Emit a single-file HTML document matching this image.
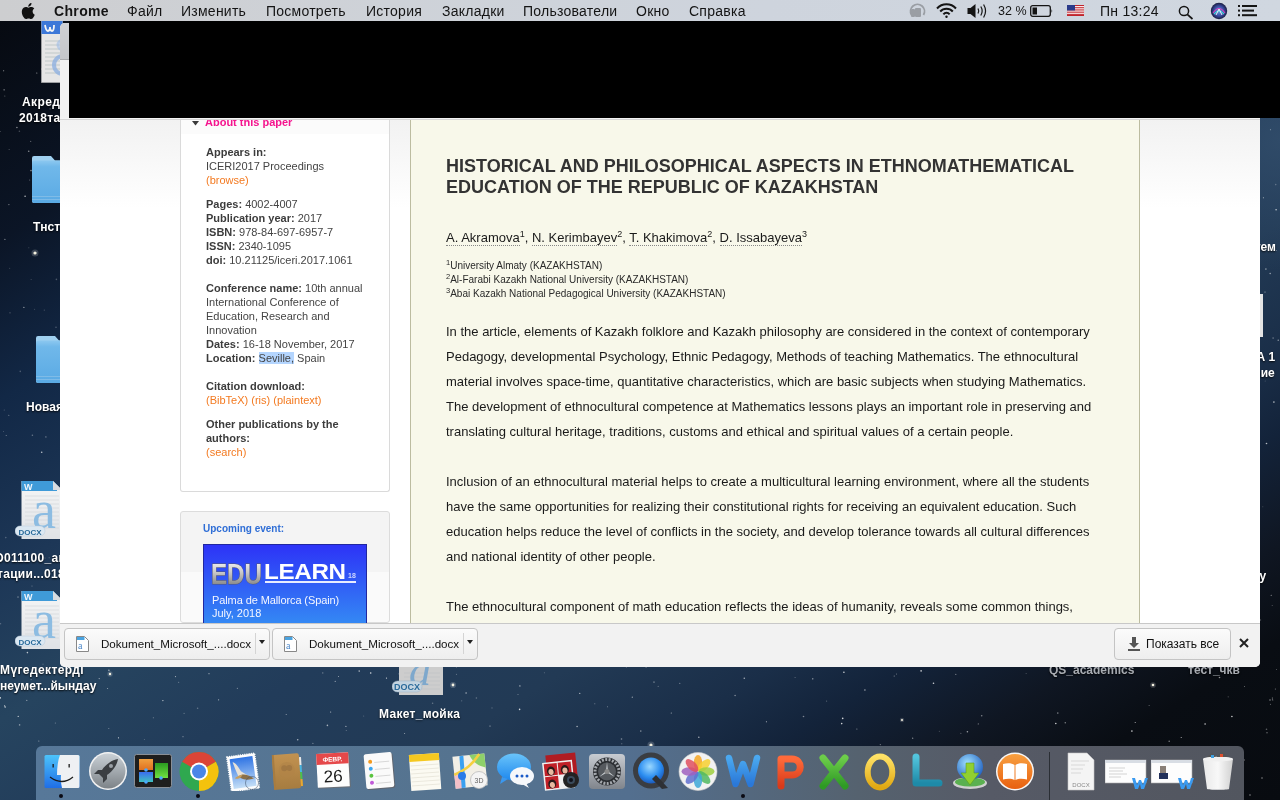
<!DOCTYPE html>
<html><head><meta charset="utf-8">
<style>
.a{will-change:transform}

*{margin:0;padding:0;box-sizing:border-box}
html,body{width:1280px;height:800px;overflow:hidden}
body{position:relative;font-family:"Liberation Sans",sans-serif;
background:radial-gradient(circle 130px at 1280px 140px, rgba(52,80,110,0.75), rgba(52,80,110,0) 100%),linear-gradient(to bottom right,#06090f 0%,#0b1526 15%,#122846 25%,#1d3757 36%,#26445f 45%,#223c5a 54%,#223a55 64%,#1a2e48 72%,#13233a 77%,#0f1622 84%,#090d13 90%,#080b10 100%);}
.a{position:absolute}
#menubar{left:0;top:0;width:1280px;height:21px;background:linear-gradient(to right,#cdced0 0%,#ced2d8 30%,#ced4dd 60%,#d0d7e0 100%);font-size:14px;color:#141414;}
#menubar .m{position:absolute;top:3px;white-space:nowrap;letter-spacing:0.25px}
.win{left:60px;top:23px;width:1200px;height:644px;background:#fff;border-radius:5px;overflow:hidden}
.side{font-size:11px;color:#444;line-height:14px;white-space:nowrap}
.side b{color:#3c3c3c}
.or{color:#f37a21}
.lbl{font-size:12px;font-weight:bold;color:#fff;text-shadow:0 1px 2px rgba(0,0,0,.9);white-space:nowrap}
.p{font-size:13px;line-height:25px;color:#1a1a1a;white-space:nowrap;left:446px}
.dl{height:32px;border:1px solid #c4c4c4;border-radius:4px;background:linear-gradient(#fbfbfb,#eeeeee)}
.dltxt{font-size:11.6px;color:#111;white-space:nowrap}
.dock{left:36px;top:746px;width:1208px;height:60px;border-radius:6px;background:linear-gradient(to right,#577899 0%,#55738f 35%,#536f8f 49%,#55626f 68%,#565a66 79%,#52565f 100%)}
.ic{position:absolute;top:752px;width:38px;height:38px}
sup.s1{font-size:9px;line-height:0;vertical-align:baseline;position:relative;top:-5px}
sup.s2{font-size:7.5px;line-height:0;vertical-align:baseline;position:relative;top:-4px}
</style></head>
<body>
<!--STARS--><svg class="a" style="left:0;top:0" width="1280" height="800" viewBox="0 0 1280 800"><circle cx="19.4" cy="131.2" r="0.8" fill="#fff" opacity="0.25"/><circle cx="4.3" cy="410.0" r="0.6" fill="#fff" opacity="0.25"/><circle cx="54.6" cy="177.4" r="0.5" fill="#fff" opacity="0.7"/><circle cx="25.1" cy="196.2" r="0.8" fill="#fff" opacity="0.7"/><circle cx="3.5" cy="431.4" r="0.5" fill="#fff" opacity="0.25"/><circle cx="34.6" cy="309.2" r="0.5" fill="#fff" opacity="0.25"/><circle cx="33.4" cy="118.4" r="0.6" fill="#fff" opacity="0.35"/><circle cx="32.4" cy="435.3" r="0.8" fill="#fff" opacity="0.35"/><circle cx="6.2" cy="435.6" r="0.5" fill="#fff" opacity="0.5"/><circle cx="5.8" cy="537.6" r="0.8" fill="#fff" opacity="0.25"/><circle cx="37.1" cy="381.4" r="0.8" fill="#fff" opacity="0.7"/><circle cx="46.6" cy="359.1" r="0.6" fill="#fff" opacity="0.5"/><circle cx="18.0" cy="597.1" r="0.8" fill="#fff" opacity="0.35"/><circle cx="4.9" cy="239.4" r="0.6" fill="#fff" opacity="0.5"/><circle cx="43.8" cy="230.5" r="0.5" fill="#fff" opacity="0.25"/><circle cx="30.7" cy="141.4" r="0.6" fill="#fff" opacity="0.35"/><circle cx="56.0" cy="327.3" r="0.8" fill="#fff" opacity="0.25"/><circle cx="45.9" cy="436.9" r="0.6" fill="#fff" opacity="0.5"/><circle cx="41.7" cy="452.3" r="0.8" fill="#fff" opacity="0.7"/><circle cx="4.1" cy="89.8" r="0.6" fill="#fff" opacity="0.7"/><circle cx="41.8" cy="69.1" r="0.8" fill="#fff" opacity="0.5"/><circle cx="38.8" cy="741.0" r="0.6" fill="#fff" opacity="0.5"/><circle cx="43.0" cy="664.2" r="0.6" fill="#fff" opacity="0.25"/><circle cx="56.4" cy="279.4" r="0.8" fill="#fff" opacity="0.25"/><circle cx="29.6" cy="180.0" r="0.6" fill="#fff" opacity="0.35"/><circle cx="44.3" cy="310.1" r="0.6" fill="#fff" opacity="0.25"/><circle cx="10.0" cy="312.8" r="0.6" fill="#fff" opacity="0.35"/><circle cx="49.2" cy="647.5" r="0.6" fill="#fff" opacity="0.7"/><circle cx="59.2" cy="516.3" r="0.6" fill="#fff" opacity="0.35"/><circle cx="9.1" cy="149.6" r="0.5" fill="#fff" opacity="0.35"/><circle cx="0.7" cy="623.7" r="0.5" fill="#fff" opacity="0.5"/><circle cx="16.9" cy="127.5" r="0.8" fill="#fff" opacity="0.5"/><circle cx="36.6" cy="252.7" r="0.5" fill="#fff" opacity="0.25"/><circle cx="27.4" cy="652.6" r="0.8" fill="#fff" opacity="0.7"/><circle cx="23.9" cy="307.3" r="0.6" fill="#fff" opacity="0.7"/><circle cx="3.7" cy="70.8" r="0.5" fill="#fff" opacity="0.7"/><circle cx="9.7" cy="268.2" r="0.5" fill="#fff" opacity="0.25"/><circle cx="0.0" cy="131.5" r="0.5" fill="#fff" opacity="0.5"/><circle cx="36.8" cy="72.9" r="0.5" fill="#fff" opacity="0.7"/><circle cx="8.9" cy="204.6" r="0.6" fill="#fff" opacity="0.5"/><circle cx="28.4" cy="105.5" r="0.6" fill="#fff" opacity="0.7"/><circle cx="28.8" cy="247.8" r="0.5" fill="#fff" opacity="0.25"/><circle cx="45.0" cy="558.0" r="0.6" fill="#fff" opacity="0.35"/><circle cx="31.0" cy="170.6" r="0.8" fill="#fff" opacity="0.5"/><circle cx="8.8" cy="415.3" r="0.5" fill="#fff" opacity="0.5"/><circle cx="58.7" cy="647.0" r="0.8" fill="#fff" opacity="0.5"/><circle cx="31.1" cy="679.6" r="0.6" fill="#fff" opacity="0.35"/><circle cx="32.0" cy="586.0" r="0.6" fill="#fff" opacity="0.35"/><circle cx="36.8" cy="592.8" r="0.5" fill="#fff" opacity="0.35"/><circle cx="49.1" cy="557.7" r="0.5" fill="#fff" opacity="0.35"/><circle cx="31.1" cy="279.4" r="0.5" fill="#fff" opacity="0.25"/><circle cx="47.4" cy="363.9" r="0.5" fill="#fff" opacity="0.5"/><circle cx="26.8" cy="700.4" r="0.6" fill="#fff" opacity="0.5"/><circle cx="4.8" cy="96.0" r="0.6" fill="#fff" opacity="0.35"/><circle cx="20.3" cy="371.4" r="0.8" fill="#fff" opacity="0.25"/><circle cx="28.8" cy="494.8" r="0.8" fill="#fff" opacity="0.25"/><circle cx="50.1" cy="108.8" r="0.6" fill="#fff" opacity="0.35"/><circle cx="28.7" cy="151.2" r="0.8" fill="#fff" opacity="0.5"/><circle cx="5.2" cy="707.0" r="0.8" fill="#fff" opacity="0.7"/><circle cx="27.8" cy="560.2" r="0.5" fill="#fff" opacity="0.35"/><circle cx="1263.4" cy="197.8" r="0.5" fill="#fff" opacity="0.7"/><circle cx="1276.1" cy="209.8" r="0.8" fill="#fff" opacity="0.7"/><circle cx="1273.1" cy="338.1" r="0.8" fill="#fff" opacity="0.35"/><circle cx="1260.4" cy="620.0" r="0.8" fill="#fff" opacity="0.25"/><circle cx="1270.5" cy="704.3" r="0.6" fill="#fff" opacity="0.35"/><circle cx="1276.5" cy="250.5" r="0.6" fill="#fff" opacity="0.35"/><circle cx="1265.9" cy="269.1" r="0.8" fill="#fff" opacity="0.5"/><circle cx="1265.2" cy="381.1" r="0.5" fill="#fff" opacity="0.25"/><circle cx="1278.2" cy="340.2" r="0.6" fill="#fff" opacity="0.7"/><circle cx="1276.5" cy="669.5" r="0.5" fill="#fff" opacity="0.35"/><circle cx="1270.5" cy="129.7" r="0.6" fill="#fff" opacity="0.35"/><circle cx="1272.2" cy="605.4" r="0.5" fill="#fff" opacity="0.35"/><circle cx="1262.8" cy="506.8" r="0.5" fill="#fff" opacity="0.25"/><circle cx="1266.5" cy="443.5" r="0.8" fill="#fff" opacity="0.7"/><circle cx="1275.7" cy="184.6" r="0.8" fill="#fff" opacity="0.25"/><circle cx="1265.0" cy="291.9" r="0.5" fill="#fff" opacity="0.7"/><circle cx="1271.2" cy="595.3" r="0.5" fill="#fff" opacity="0.7"/><circle cx="1266.5" cy="729.3" r="0.8" fill="#fff" opacity="0.35"/><circle cx="1273.9" cy="402.1" r="0.8" fill="#fff" opacity="0.7"/><circle cx="1270.2" cy="273.5" r="0.8" fill="#fff" opacity="0.5"/><circle cx="1181.2" cy="737.5" r="0.5" fill="#fff" opacity="0.8"/><circle cx="175.5" cy="676.6" r="0.6" fill="#fff" opacity="0.6"/><circle cx="92.9" cy="686.0" r="0.5" fill="#fff" opacity="0.45"/><circle cx="856.9" cy="728.9" r="0.5" fill="#fff" opacity="0.6"/><circle cx="183.0" cy="736.7" r="0.6" fill="#fff" opacity="0.45"/><circle cx="955.8" cy="674.4" r="0.6" fill="#fff" opacity="0.45"/><circle cx="1267.0" cy="732.8" r="0.5" fill="#fff" opacity="0.8"/><circle cx="1272.4" cy="698.9" r="0.6" fill="#fff" opacity="0.45"/><circle cx="456.5" cy="674.3" r="0.6" fill="#fff" opacity="0.3"/><circle cx="432.6" cy="703.2" r="0.8" fill="#fff" opacity="0.3"/><circle cx="492.0" cy="707.9" r="0.6" fill="#fff" opacity="0.3"/><circle cx="144.4" cy="739.6" r="0.5" fill="#fff" opacity="0.3"/><circle cx="107.6" cy="688.5" r="0.5" fill="#fff" opacity="0.6"/><circle cx="967.4" cy="731.8" r="0.8" fill="#fff" opacity="0.6"/><circle cx="519.6" cy="709.4" r="0.8" fill="#fff" opacity="0.8"/><circle cx="896.5" cy="674.1" r="0.5" fill="#fff" opacity="0.45"/><circle cx="544.4" cy="672.7" r="0.5" fill="#fff" opacity="0.3"/><circle cx="1026.1" cy="673.6" r="0.5" fill="#fff" opacity="0.3"/><circle cx="338.5" cy="676.6" r="0.5" fill="#fff" opacity="0.6"/><circle cx="1272.7" cy="700.0" r="0.6" fill="#fff" opacity="0.45"/><circle cx="55.3" cy="723.1" r="0.5" fill="#fff" opacity="0.45"/><circle cx="335.2" cy="681.3" r="0.6" fill="#fff" opacity="0.6"/><circle cx="679.8" cy="683.3" r="0.6" fill="#fff" opacity="0.45"/><circle cx="346.3" cy="730.5" r="0.6" fill="#fff" opacity="0.3"/><circle cx="19.6" cy="724.9" r="0.8" fill="#fff" opacity="0.45"/><circle cx="658.2" cy="686.4" r="0.6" fill="#fff" opacity="0.3"/><circle cx="842.7" cy="718.4" r="0.8" fill="#fff" opacity="0.8"/><circle cx="698.8" cy="737.2" r="0.8" fill="#fff" opacity="0.6"/><circle cx="880.3" cy="744.6" r="0.6" fill="#fff" opacity="0.45"/><circle cx="1065.3" cy="722.8" r="0.8" fill="#fff" opacity="0.45"/><circle cx="518.0" cy="694.5" r="0.5" fill="#fff" opacity="0.45"/><circle cx="18.2" cy="716.4" r="0.6" fill="#fff" opacity="0.8"/><circle cx="209.0" cy="673.7" r="0.6" fill="#fff" opacity="0.6"/><circle cx="766.4" cy="721.7" r="0.5" fill="#fff" opacity="0.8"/><circle cx="237.3" cy="688.3" r="0.5" fill="#fff" opacity="0.6"/><circle cx="466.1" cy="693.0" r="0.8" fill="#fff" opacity="0.6"/><circle cx="312.9" cy="743.3" r="0.6" fill="#fff" opacity="0.45"/><circle cx="456.4" cy="667.1" r="0.6" fill="#fff" opacity="0.3"/><circle cx="607.5" cy="706.7" r="0.5" fill="#fff" opacity="0.45"/><circle cx="646.1" cy="667.4" r="0.6" fill="#fff" opacity="0.3"/><circle cx="184.1" cy="713.4" r="0.6" fill="#fff" opacity="0.3"/><circle cx="383.5" cy="716.7" r="0.5" fill="#fff" opacity="0.45"/><circle cx="841.7" cy="723.6" r="0.8" fill="#fff" opacity="0.8"/><circle cx="978.3" cy="723.9" r="0.6" fill="#fff" opacity="0.45"/><circle cx="363.7" cy="715.9" r="0.5" fill="#fff" opacity="0.3"/><circle cx="1055.8" cy="723.5" r="0.8" fill="#fff" opacity="0.8"/><circle cx="939.3" cy="731.2" r="0.5" fill="#fff" opacity="0.3"/><circle cx="1057.8" cy="713.1" r="0.8" fill="#fff" opacity="0.45"/><circle cx="108.9" cy="670.3" r="0.8" fill="#fff" opacity="0.6"/><circle cx="1228.2" cy="696.8" r="0.6" fill="#fff" opacity="0.3"/><circle cx="803.5" cy="716.5" r="0.8" fill="#fff" opacity="0.45"/><circle cx="626.3" cy="667.3" r="0.5" fill="#fff" opacity="0.3"/><circle cx="843.9" cy="672.2" r="0.8" fill="#fff" opacity="0.8"/><circle cx="322.8" cy="672.9" r="0.6" fill="#fff" opacity="0.45"/><circle cx="933.5" cy="683.2" r="0.8" fill="#fff" opacity="0.8"/><circle cx="632.3" cy="697.2" r="0.6" fill="#fff" opacity="0.6"/><circle cx="981.7" cy="715.7" r="0.8" fill="#fff" opacity="0.45"/><circle cx="99.2" cy="678.6" r="0.6" fill="#fff" opacity="0.6"/><circle cx="795.1" cy="677.5" r="0.6" fill="#fff" opacity="0.3"/><circle cx="621.8" cy="743.8" r="0.5" fill="#fff" opacity="0.45"/><circle cx="864.9" cy="690.0" r="0.8" fill="#fff" opacity="0.6"/><circle cx="594.8" cy="703.8" r="0.5" fill="#fff" opacity="0.45"/><circle cx="398.9" cy="673.8" r="0.6" fill="#fff" opacity="0.3"/><circle cx="370.7" cy="673.0" r="0.8" fill="#fff" opacity="0.8"/><circle cx="1272.3" cy="697.6" r="0.5" fill="#fff" opacity="0.3"/><circle cx="744.3" cy="678.2" r="0.8" fill="#fff" opacity="0.6"/><circle cx="1219.5" cy="677.5" r="0.8" fill="#fff" opacity="0.6"/><circle cx="1135.2" cy="722.6" r="0.5" fill="#fff" opacity="0.8"/><circle cx="1149.1" cy="705.4" r="0.5" fill="#fff" opacity="0.45"/><circle cx="4.6" cy="705.8" r="0.6" fill="#fff" opacity="0.8"/><circle cx="386.5" cy="678.1" r="0.6" fill="#fff" opacity="0.8"/><circle cx="404.6" cy="733.4" r="0.5" fill="#fff" opacity="0.6"/><circle cx="960.9" cy="733.3" r="0.5" fill="#fff" opacity="0.45"/><circle cx="912.7" cy="738.2" r="0.6" fill="#fff" opacity="0.6"/><circle cx="476.4" cy="698.0" r="0.8" fill="#fff" opacity="0.3"/><circle cx="461.7" cy="700.8" r="0.6" fill="#fff" opacity="0.3"/><circle cx="359.2" cy="671.1" r="0.8" fill="#fff" opacity="0.6"/><circle cx="812.8" cy="678.8" r="0.6" fill="#fff" opacity="0.8"/><circle cx="654.0" cy="682.0" r="0.6" fill="#fff" opacity="0.8"/><circle cx="1131.9" cy="731.1" r="0.8" fill="#fff" opacity="0.8"/><circle cx="1169.2" cy="741.3" r="0.8" fill="#fff" opacity="0.45"/><circle cx="921.1" cy="670.9" r="0.8" fill="#fff" opacity="0.8"/><circle cx="577.1" cy="726.5" r="0.8" fill="#fff" opacity="0.6"/><circle cx="621.5" cy="739.0" r="0.8" fill="#fff" opacity="0.45"/><circle cx="218.6" cy="699.8" r="0.6" fill="#fff" opacity="0.6"/><circle cx="327.4" cy="725.4" r="0.8" fill="#fff" opacity="0.6"/><circle cx="519.9" cy="685.9" r="0.6" fill="#fff" opacity="0.8"/><circle cx="153.3" cy="717.8" r="0.5" fill="#fff" opacity="0.45"/><circle cx="640.8" cy="731.1" r="0.8" fill="#fff" opacity="0.45"/><circle cx="579.8" cy="693.3" r="0.6" fill="#fff" opacity="0.8"/><circle cx="178.7" cy="682.2" r="0.5" fill="#fff" opacity="0.45"/><circle cx="437.7" cy="674.2" r="0.5" fill="#fff" opacity="0.6"/><circle cx="330.7" cy="712.0" r="0.5" fill="#fff" opacity="0.8"/><circle cx="490.0" cy="725.9" r="0.5" fill="#fff" opacity="0.8"/><circle cx="345.9" cy="726.4" r="0.6" fill="#fff" opacity="0.6"/><circle cx="735.1" cy="695.5" r="0.8" fill="#fff" opacity="0.45"/><circle cx="118.5" cy="737.8" r="0.6" fill="#fff" opacity="0.8"/><circle cx="826.6" cy="701.1" r="0.6" fill="#fff" opacity="0.3"/><circle cx="162.9" cy="700.6" r="0.6" fill="#fff" opacity="0.8"/><circle cx="0.2" cy="697.9" r="0.8" fill="#fff" opacity="0.8"/><circle cx="1244.5" cy="686.6" r="0.5" fill="#fff" opacity="0.45"/><circle cx="197.6" cy="708.3" r="0.8" fill="#fff" opacity="0.3"/><circle cx="1205.1" cy="724.0" r="0.8" fill="#fff" opacity="0.8"/><circle cx="108.8" cy="728.4" r="0.5" fill="#fff" opacity="0.45"/><circle cx="297.7" cy="739.7" r="0.8" fill="#fff" opacity="0.6"/><circle cx="1231.9" cy="716.5" r="0.8" fill="#fff" opacity="0.8"/><circle cx="894.2" cy="675.9" r="0.5" fill="#fff" opacity="0.6"/><circle cx="671.3" cy="713.0" r="0.6" fill="#fff" opacity="0.6"/><circle cx="286.2" cy="714.5" r="0.5" fill="#fff" opacity="0.6"/><circle cx="1275.4" cy="689.0" r="0.6" fill="#fff" opacity="0.45"/><circle cx="1244.0" cy="760.0" r="0.7" fill="#fff" opacity="0.6"/><circle cx="1262.0" cy="778.0" r="0.7" fill="#fff" opacity="0.6"/><circle cx="1250.0" cy="795.0" r="0.7" fill="#fff" opacity="0.6"/><circle cx="1270.0" cy="700.0" r="0.7" fill="#fff" opacity="0.6"/><circle cx="35" cy="253" r="3.5200000000000005" fill="#fff" opacity="0.18"/><circle cx="35" cy="253" r="1.6" fill="#fffbe8" opacity="0.95"/><circle cx="110" cy="674" r="2.64" fill="#fff" opacity="0.18"/><circle cx="110" cy="674" r="1.2" fill="#fffbe8" opacity="0.95"/><circle cx="453" cy="685" r="3.08" fill="#fff" opacity="0.18"/><circle cx="453" cy="685" r="1.4" fill="#fffbe8" opacity="0.95"/><circle cx="651" cy="745" r="3.5200000000000005" fill="#fff" opacity="0.18"/><circle cx="651" cy="745" r="1.6" fill="#fffbe8" opacity="0.95"/><circle cx="1153" cy="685" r="2.8600000000000003" fill="#fff" opacity="0.18"/><circle cx="1153" cy="685" r="1.3" fill="#fffbe8" opacity="0.95"/><circle cx="902" cy="720" r="2.2" fill="#fff" opacity="0.18"/><circle cx="902" cy="720" r="1.0" fill="#fffbe8" opacity="0.95"/></svg><!--/STARS-->
<!-- desktop left icons -->
<svg class="a" style="left:41px;top:21px" width="22" height="62" viewBox="0 0 22 62"><rect x="0.5" y="0" width="21" height="61.5" fill="#e6e6e6" stroke="#b8b8b8" stroke-width="0.6"/><rect x="0.5" y="0" width="21" height="13" fill="#3d78d8"/><path d="M4 4 Q5 10 7 10 Q9 10 9 6 Q9 10 11 10 Q13 10 13 4" fill="none" stroke="#f4f4f4" stroke-width="1.8"/><g stroke="#9aa" stroke-width="0.5"><line x1="4" y1="20" x2="20" y2="20"/><line x1="4" y1="24" x2="20" y2="24"/><line x1="4" y1="28" x2="20" y2="28"/><line x1="4" y1="32" x2="20" y2="32"/><line x1="4" y1="36" x2="20" y2="36"/><line x1="4" y1="40" x2="20" y2="40"/><line x1="4" y1="44" x2="20" y2="44"/><line x1="4" y1="48" x2="20" y2="48"/><line x1="4" y1="52" x2="20" y2="52"/></g><circle cx="22" cy="44" r="9" fill="none" stroke="#8fb0e0" stroke-width="4" opacity="0.8"/><circle cx="22" cy="24" r="5" fill="none" stroke="#9fbce6" stroke-width="3" opacity="0.6"/></svg>
<div class="a lbl" style="left:22px;top:95px;letter-spacing:0.4px">Акредитация</div>
<div class="a lbl" style="left:19px;top:111px;letter-spacing:0.4px">2018таблица</div>
<svg class="a" style="left:32px;top:156px" width="30" height="48" viewBox="0 0 30 48"><path d="M2 0 H19 L23 4.5 H30 V47 H2 a2 2 0 0 1 -2 -2 V2 a2 2 0 0 1 2 -2z" fill="#9fd0f0"/><path d="M0 7 a2.5 2.5 0 0 1 2.5 -2.5 H30 V47 H2.5 a2.5 2.5 0 0 1 -2.5 -2.5z" fill="url(#fold)"/><rect x="0" y="40" width="30" height="0.8" fill="#88c0e8"/><rect x="0" y="43" width="30" height="0.8" fill="#88c0e8"/><defs><linearGradient id="fold" x1="0" y1="0" x2="0" y2="1"><stop offset="0" stop-color="#8cc8f0"/><stop offset="0.15" stop-color="#70b8ea"/><stop offset="1" stop-color="#5aaae4"/></linearGradient></defs></svg>
<div class="a lbl" style="left:33px;top:220px">Тнсти</div>
<svg class="a" style="left:35.5px;top:336px" width="30" height="48" viewBox="0 0 30 48"><path d="M2 0 H19 L23 4.5 H30 V47 H2 a2 2 0 0 1 -2 -2 V2 a2 2 0 0 1 2 -2z" fill="#9fd0f0"/><path d="M0 7 a2.5 2.5 0 0 1 2.5 -2.5 H30 V47 H2.5 a2.5 2.5 0 0 1 -2.5 -2.5z" fill="url(#fold)"/><rect x="0" y="40" width="30" height="0.8" fill="#88c0e8"/><rect x="0" y="43" width="30" height="0.8" fill="#88c0e8"/></svg>
<div class="a lbl" style="left:25.5px;top:400px">Новая папка</div>
<svg class="a" style="left:15px;top:480px" width="48" height="60" viewBox="0 0 48 60"><path d="M6.5 1 H38 L47 10 V59 H6.5z" fill="url(#docg)"/><path d="M6.5 1 H38 L42 5 V11 H6.5z" fill="#3f9ad8"/><path d="M38 1 L47 10 H38z" fill="#d8dce0"/><text x="9" y="10" font-family="Liberation Sans" font-weight="bold" font-size="9" fill="#f0f6fc">W</text><g stroke="#c8ccd0" stroke-width="0.5"><line x1="10" y1="16" x2="44" y2="16"/><line x1="10" y1="20" x2="44" y2="20"/><line x1="10" y1="24" x2="44" y2="24"/><line x1="10" y1="28" x2="44" y2="28"/><line x1="10" y1="32" x2="44" y2="32"/><line x1="10" y1="36" x2="44" y2="36"/><line x1="10" y1="40" x2="44" y2="40"/><line x1="10" y1="44" x2="44" y2="44"/><line x1="10" y1="48" x2="44" y2="48"/></g><text x="17" y="47.5" font-family="Liberation Serif" font-size="54" fill="#8cbce2">a</text><rect x="0" y="46" width="30" height="10" rx="5" fill="#dbe8f2" stroke="#b8c8d8" stroke-width="0.5"/><text x="15" y="54.5" font-family="Liberation Sans" font-weight="bold" font-size="8" fill="#2a6a9a" text-anchor="middle">DOCX</text><defs><linearGradient id="docg" x1="0" y1="0" x2="0" y2="1"><stop offset="0" stop-color="#f6f6f6"/><stop offset="1" stop-color="#dfe2e6"/></linearGradient></defs></svg>
<div class="a lbl" style="left:-5px;top:551px;letter-spacing:0.3px">D011100_аккред</div>
<div class="a lbl" style="left:-3px;top:567px;letter-spacing:0.3px">тации...018года</div>
<svg class="a" style="left:15px;top:590px" width="48" height="60" viewBox="0 0 48 60"><path d="M6.5 1 H38 L47 10 V59 H6.5z" fill="url(#docg)"/><path d="M6.5 1 H38 L42 5 V11 H6.5z" fill="#3f9ad8"/><path d="M38 1 L47 10 H38z" fill="#d8dce0"/><text x="9" y="10" font-family="Liberation Sans" font-weight="bold" font-size="9" fill="#f0f6fc">W</text><g stroke="#c8ccd0" stroke-width="0.5"><line x1="10" y1="16" x2="44" y2="16"/><line x1="10" y1="20" x2="44" y2="20"/><line x1="10" y1="24" x2="44" y2="24"/><line x1="10" y1="28" x2="44" y2="28"/><line x1="10" y1="32" x2="44" y2="32"/><line x1="10" y1="36" x2="44" y2="36"/><line x1="10" y1="40" x2="44" y2="40"/><line x1="10" y1="44" x2="44" y2="44"/><line x1="10" y1="48" x2="44" y2="48"/></g><text x="17" y="47.5" font-family="Liberation Serif" font-size="54" fill="#8cbce2">a</text><rect x="0" y="46" width="30" height="10" rx="5" fill="#dbe8f2" stroke="#b8c8d8" stroke-width="0.5"/><text x="15" y="54.5" font-family="Liberation Sans" font-weight="bold" font-size="8" fill="#2a6a9a" text-anchor="middle">DOCX</text></svg>
<div class="a lbl" style="left:0px;top:663px;letter-spacing:0.4px">Мүгедектерді</div>
<div class="a lbl" style="left:0px;top:679px">неумет...йындау</div>
<!-- bottom/right desktop icons -->
<svg class="a" style="left:392px;top:640px" width="54" height="58" viewBox="0 0 54 58"><path d="M7 1 H51 V55 H7z" fill="#cdcdcd"/><g stroke="#b8bcc0" stroke-width="0.5"><line x1="12" y1="33" x2="48" y2="33"/><line x1="12" y1="37" x2="48" y2="37"/><line x1="12" y1="41" x2="48" y2="41"/><line x1="12" y1="45" x2="48" y2="45"/><line x1="12" y1="49" x2="48" y2="49"/></g><text x="17" y="45" font-family="Liberation Serif" font-style="italic" font-size="44" fill="#7ea8cc">a</text><rect x="0" y="41" width="30" height="11" rx="5.5" fill="#c4d4e0" stroke="#9ab0c4" stroke-width="0.5"/><text x="15" y="50" font-family="Liberation Sans" font-weight="bold" font-size="9" fill="#2a6a9a" text-anchor="middle">DOCX</text></svg>
<div class="a lbl" style="left:379px;top:707px;letter-spacing:0.3px">Макет_мойка</div>
<div class="a lbl" style="left:1049px;top:663px;color:#a8acb2">QS_academics</div>
<div class="a lbl" style="left:1188px;top:663px;color:#a8acb2">тест_чкв</div>
<div class="a" style="left:1255px;top:294px;width:8px;height:43px;background:#e4e4e4"></div>
<div class="a lbl" style="left:1232px;top:240px">Систем</div>
<div class="a lbl" style="left:1248px;top:350px">ДА 1</div>
<div class="a lbl" style="left:1246px;top:366px">ниие</div>
<div class="a lbl" style="left:1252px;top:569px">лу</div>
<!-- menubar -->
<div id="menubar" class="a">
  <svg class="a" style="left:21px;top:3px" width="14" height="16" viewBox="0 0 14 16"><path d="M11.6 8.5c0-2 1.6-2.9 1.7-3-0.9-1.3-2.4-1.5-2.9-1.5-1.2-0.1-2.4 0.7-3 0.7-0.6 0-1.6-0.7-2.6-0.7-1.3 0-2.6 0.8-3.3 2-1.4 2.4-0.4 6 1 8 0.7 1 1.5 2 2.5 2 1 0 1.4-0.6 2.6-0.6 1.2 0 1.5 0.6 2.6 0.6 1.1 0 1.8-1 2.4-2 0.8-1.1 1.1-2.2 1.1-2.3 0 0-2.1-0.8-2.1-3.2zM9.7 2.6c0.5-0.7 0.9-1.6 0.8-2.6-0.8 0-1.8 0.5-2.4 1.2-0.5 0.6-1 1.6-0.8 2.5 0.9 0.1 1.8-0.4 2.4-1.1z" fill="#111"/></svg>
  <span class="m" style="left:54px;font-weight:bold;letter-spacing:0.35px">Chrome</span>
  <span class="m" style="left:127px">Файл</span>
  <span class="m" style="left:181px">Изменить</span>
  <span class="m" style="left:266px">Посмотреть</span>
  <span class="m" style="left:366px">История</span>
  <span class="m" style="left:442px">Закладки</span>
  <span class="m" style="left:523px">Пользователи</span>
  <span class="m" style="left:636px">Окно</span>
  <span class="m" style="left:689px">Справка</span>
  <span class="m" style="left:998px;font-size:12.5px;top:3.5px;letter-spacing:0">32 %</span>
  <span class="m" style="left:1100px">Пн 13:24</span>

  <svg class="a" style="left:909px;top:3px" width="17" height="16" viewBox="0 0 17 16"><path d="M2.5 12 A7 7 0 1 1 14.5 12" fill="none" stroke="#9a9ea4" stroke-width="1.8"/><rect x="2" y="6" width="4" height="8" rx="1" fill="#9a9ea4"/><rect x="6" y="5" width="6" height="9" rx="1" fill="#9a9ea4"/></svg>
  <svg class="a" style="left:936px;top:3px" width="21" height="15" viewBox="0 0 21 15"><path d="M1 5.5 A13 13 0 0 1 20 5.5" fill="none" stroke="#141414" stroke-width="2"/><path d="M4.2 8.5 A8.5 8.5 0 0 1 16.8 8.5" fill="none" stroke="#141414" stroke-width="2"/><path d="M7.4 11.3 A4 4 0 0 1 13.6 11.3" fill="none" stroke="#141414" stroke-width="2"/><circle cx="10.5" cy="13.8" r="1.2" fill="#141414"/></svg>
  <svg class="a" style="left:967px;top:3px" width="21" height="16" viewBox="0 0 21 16"><path d="M0.5 5 H3.5 L8.5 1 V15 L3.5 11 H0.5z" fill="#141414"/><path d="M11 5.5 Q12.5 8 11 10.5" fill="none" stroke="#141414" stroke-width="1.2"/><path d="M13.8 3.5 Q16.5 8 13.8 12.5" fill="none" stroke="#141414" stroke-width="1.2"/><path d="M16.6 1.5 Q20.5 8 16.6 14.5" fill="none" stroke="#141414" stroke-width="1.2"/></svg>
  <svg class="a" style="left:1030px;top:5px" width="24" height="12" viewBox="0 0 24 12"><rect x="0.7" y="0.7" width="19.6" height="10.6" rx="2" fill="none" stroke="#141414" stroke-width="1.3"/><rect x="2.5" y="2.5" width="4.5" height="7" fill="#141414"/><path d="M21.5 4 Q23 6 21.5 8z" fill="#141414"/></svg>
  <svg class="a" style="left:1067px;top:5px" width="17" height="11" viewBox="0 0 17 11"><rect width="17" height="11" fill="#fff"/><g fill="#c0242c"><rect y="0" width="17" height="1.1"/><rect y="2.2" width="17" height="1.1"/><rect y="4.4" width="17" height="1.1"/><rect y="6.6" width="17" height="1.1"/><rect y="8.8" width="17" height="1.1"/><rect y="10" width="17" height="1"/></g><rect width="8" height="5.5" fill="#2a3a8a"/></svg>
  <svg class="a" style="left:1178px;top:5px" width="16" height="15" viewBox="0 0 16 15"><circle cx="6" cy="6" r="4.6" fill="none" stroke="#141414" stroke-width="1.5"/><path d="M9.3 9.3 L14.5 14" stroke="#141414" stroke-width="1.7"/></svg>
  <svg class="a" style="left:1210px;top:2px" width="18" height="18" viewBox="0 0 18 18"><defs><radialGradient id="siri" cx="0.5" cy="0.5" r="0.5"><stop offset="0" stop-color="#6aa0e0"/><stop offset="0.6" stop-color="#3a4aa0"/><stop offset="1" stop-color="#181c40"/></radialGradient></defs><circle cx="9" cy="9" r="8.2" fill="url(#siri)"/><path d="M3 11 Q9 2 15 11" fill="none" stroke="#e040c0" stroke-width="1.2" opacity="0.9"/><path d="M4 12 Q9 6 14 12" fill="none" stroke="#40e0e0" stroke-width="1.2" opacity="0.9"/><path d="M6 13 L9 7 L12 13" fill="none" stroke="#ffffff" stroke-width="0.9"/></svg>
  <svg class="a" style="left:1238px;top:5px" width="19" height="12" viewBox="0 0 19 12"><g fill="#141414"><rect x="0" y="0" width="2" height="2"/><rect x="0" y="4.6" width="2" height="2"/><rect x="0" y="9.2" width="2" height="2"/><rect x="4" y="0" width="15" height="2"/><rect x="4" y="4.6" width="12" height="2"/><rect x="4" y="9.2" width="15" height="2"/></g></svg>
</div>

<!-- chrome window -->
<div class="a win">
  <div class="a" style="left:0;top:0;width:1200px;height:37px;background:linear-gradient(#cfd0d3,#c5c6ca);border-bottom:1px solid #a9aaad"></div>
  <div class="a" style="left:0;top:37px;width:1200px;height:58px;background:#f2f2f2"></div>
  <div class="a" style="left:0;top:96px;width:1200px;height:1px;background:#d4d4d4"></div>
  <div class="a" style="left:0;top:97px;width:1200px;height:503px;background:linear-gradient(180deg,#f2f2f2 0px,#ffffff 88px,#fff 100%)"></div>
  <div class="a" style="left:0;top:600px;width:1200px;height:44px;background:#f2f2f2;border-top:1px solid #c8c8c8"></div>
</div>

<!-- sidebar -->
<div class="a" style="left:180px;top:100px;width:210px;height:392px;background:#fff;border:1px solid #dadada;border-top:none;border-radius:0 0 3px 3px"></div>
<div class="a" style="left:181px;top:100px;width:208px;height:34px;background:#fbfbfb"></div>
<svg class="a" style="left:192px;top:121px" width="7" height="5" viewBox="0 0 7 5"><path d="M0 0H7L3.5 4.5z" fill="#3a3a3a"/></svg>
<div class="a" style="left:205px;top:115px;font-size:11px;font-weight:bold;color:#f5148e;line-height:14px">About this paper</div>
<div class="a side" style="left:206px;top:145px">
  <div><b>Appears in:</b><br>ICERI2017 Proceedings<br><span class="or">(browse)</span></div>
  <div style="margin-top:10px"><b>Pages:</b> 4002-4007<br><b>Publication year:</b> 2017<br><b>ISBN:</b> 978-84-697-6957-7<br><b>ISSN:</b> 2340-1095<br><b>doi:</b> 10.21125/iceri.2017.1061</div>
  <div style="margin-top:14px"><b>Conference name:</b> 10th annual<br>International Conference of<br>Education, Research and<br>Innovation<br><b>Dates:</b> 16-18 November, 2017<br><b>Location:</b> <span style="background:#b4d5fe">Seville,</span> Spain</div>
  <div style="margin-top:14px"><b>Citation download:</b><br><span class="or">(BibTeX) (ris) (plaintext)</span></div>
  <div style="margin-top:10px"><b>Other publications by the</b><br><b>authors:</b><br><span class="or">(search)</span></div>
</div>
<div class="a" style="left:180px;top:511px;width:210px;height:112px;background:linear-gradient(#f4f4f4 0px,#f4f4f4 60px,#fafafa 60px);border:1px solid #dcdcdc;border-radius:3px"></div>
<div class="a" style="left:203px;top:522px;font-size:10px;font-weight:bold;color:#2f6ed6;line-height:14px">Upcoming event:</div>
<div class="a" style="left:203px;top:544px;width:164px;height:79px;background:linear-gradient(180deg,#2d33f7 0%,#3488f4 100%);border:1px solid #2027a0;border-bottom:none;overflow:hidden">
  <svg class="a" style="left:6px;top:15px" width="56" height="26" viewBox="0 0 56 26"><defs><linearGradient id="edug" x1="0" y1="0" x2="0" y2="1"><stop offset="0" stop-color="#ffffff"/><stop offset="0.45" stop-color="#c8c8c8"/><stop offset="1" stop-color="#6e6e6e"/></linearGradient></defs><text x="1" y="24" font-family="Liberation Sans" font-weight="bold" font-size="29" textLength="51" lengthAdjust="spacingAndGlyphs" fill="url(#edug)" stroke="#5a5a6a" stroke-width="0.9" paint-order="stroke">EDU</text></svg>
  <div class="a" style="left:60px;top:16px;font:bold 22px/22px 'Liberation Sans';letter-spacing:-0.3px;color:#fff;transform:scaleX(1.1);transform-origin:0 0">LEARN</div>
  <div class="a" style="left:61px;top:36px;width:91px;height:2px;background:#e8ecff"></div>
  <div class="a" style="left:144px;top:27px;font:bold 7px 'Liberation Sans';color:#cfd6ff">18</div>
  <div class="a" style="left:8px;top:49px;font:11px/12px 'Liberation Sans';color:#f4f6ff;letter-spacing:-0.1px">Palma de Mallorca (Spain)</div>
  <div class="a" style="left:8px;top:62px;font:11px/12px 'Liberation Sans';color:#f4f6ff">July, 2018</div>
</div>

<!-- content -->
<div class="a" style="left:410px;top:100px;width:730px;height:523px;background:#f8f8ea;border-left:1px solid #bcbca0;border-right:1px solid #bcbca0"></div>
<div class="a" style="left:446px;top:156px;font:bold 18px/21px 'Liberation Sans';color:#333;white-space:nowrap">HISTORICAL AND PHILOSOPHICAL ASPECTS IN ETHNOMATHEMATICAL<br>EDUCATION OF THE REPUBLIC OF KAZAKHSTAN</div>
<div class="a" style="left:446px;top:230px;font:13px/15px 'Liberation Sans';color:#1a1a1a;white-space:nowrap">
<span style="border-bottom:1px dotted #888">A. Akramova</span><sup class="s1">1</sup>, <span style="border-bottom:1px dotted #888">N. Kerimbayev</span><sup class="s1">2</sup>, <span style="border-bottom:1px dotted #888">T. Khakimova</span><sup class="s1">2</sup>, <span style="border-bottom:1px dotted #888">D. Issabayeva</span><sup class="s1">3</sup></div>
<div class="a" style="left:446px;top:259px;font:10px/14px 'Liberation Sans';color:#2a2a2a;white-space:nowrap">
<sup class="s2">1</sup>University Almaty (KAZAKHSTAN)<br><sup class="s2">2</sup>Al-Farabi Kazakh National University (KAZAKHSTAN)<br><sup class="s2">3</sup>Abai Kazakh National Pedagogical University (KAZAKHSTAN)</div>
<div class="a p" style="top:319px">In the article, elements of Kazakh folklore and Kazakh philosophy are considered in the context of contemporary<br>Pedagogy, developmental Psychology, Ethnic Pedagogy, Methods of teaching Mathematics. The ethnocultural<br>material involves space-time, quantitative characteristics, which are basic subjects when studying Mathematics.<br>The development of ethnocultural competence at Mathematics lessons plays an important role in preserving and<br>translating cultural heritage, traditions, customs and ethical and spiritual values of a certain people.</div>
<div class="a p" style="top:469px">Inclusion of an ethnocultural material helps to create a multicultural learning environment, where all the students<br>have the same opportunities for realizing their constitutional rights for receiving an equivalent education. Such<br>education helps reduce the level of conflicts in the society, and develop tolerance towards all cultural differences<br>and national identity of other people.</div>
<div class="a" style="left:410px;top:594px;width:730px;height:29px;overflow:hidden">
<div class="a p" style="left:36px;top:0px">The ethnocultural component of math education reflects the ideas of humanity, reveals some common things,</div>
</div>

<!-- black box -->
<div class="a" style="left:60px;top:118px;width:1200px;height:1px;background:#f4f4f4"></div>
<div class="a" style="left:60px;top:119px;width:1200px;height:1px;background:#d6d6d6"></div>
<div class="a" style="left:69px;top:21px;width:1211px;height:97px;background:#000"></div>

<!-- download bar items -->
<div class="a dl" style="left:64px;top:628px;width:206px"></div>
<div class="a" style="left:255px;top:633px;width:1px;height:21px;background:#d4d4d4"></div>
<div class="a" style="left:259px;top:640px;width:0;height:0;border-left:3px solid transparent;border-right:3px solid transparent;border-top:4px solid #222"></div>
<div class="a dl" style="left:272px;top:628px;width:206px"></div>
<div class="a" style="left:463px;top:633px;width:1px;height:21px;background:#d4d4d4"></div>
<div class="a" style="left:467px;top:640px;width:0;height:0;border-left:3px solid transparent;border-right:3px solid transparent;border-top:4px solid #222"></div>
<div class="a dltxt" style="left:101px;top:637px">Dokument_Microsoft_....docx</div>
<div class="a dltxt" style="left:309px;top:637px">Dokument_Microsoft_....docx</div>
<svg class="a" style="left:76px;top:636px" width="13" height="16" viewBox="0 0 13 16"><path d="M0.5 0.5h8l4 4v11h-12z" fill="#fff" stroke="#888" stroke-width="1"/><rect x="1" y="1" width="7.5" height="3" fill="#4aa3e0"/><text x="2" y="13" font-family="Liberation Serif" font-size="10" fill="#4a86c8">a</text></svg>
<svg class="a" style="left:284px;top:636px" width="13" height="16" viewBox="0 0 13 16"><path d="M0.5 0.5h8l4 4v11h-12z" fill="#fff" stroke="#888" stroke-width="1"/><rect x="1" y="1" width="7.5" height="3" fill="#4aa3e0"/><text x="2" y="13" font-family="Liberation Serif" font-size="10" fill="#4a86c8">a</text></svg>
<div class="a dl" style="left:1114px;top:628px;width:117px"></div>
<svg class="a" style="left:1127px;top:637px" width="14" height="14" viewBox="0 0 14 14"><path d="M5 0h4v6h3l-5 5-5-5h3z" fill="#555"/><rect x="1" y="12" width="12" height="2" fill="#555"/></svg>
<div class="a dltxt" style="left:1146px;top:637px;font-size:12px">Показать все</div>
<svg class="a" style="left:1239px;top:638px" width="10" height="10" viewBox="0 0 10 10"><path d="M1 1L9 9M9 1L1 9" stroke="#222" stroke-width="2"/></svg>

<!-- dock -->
<div class="a dock"></div>
<!--DOCK-->
<svg class="a" style="left:41.5px;top:751px" width="40" height="40" viewBox="0 0 40 40"><defs><linearGradient id="fnl" x1="0" y1="0" x2="0" y2="1"><stop offset="0" stop-color="#4cc3fb"/><stop offset="1" stop-color="#1f6ee6"/></linearGradient></defs>
<rect x="2.5" y="4" width="35" height="33" rx="1.5" fill="url(#fnl)"/>
<path d="M18 4 H36 a1.5 1.5 0 0 1 1.5 1.5 V35.5 a1.5 1.5 0 0 1 -1.5 1.5 H20 C19 32 18.5 28 19 24 H15 C15 16 16 9 18 4z" fill="#eef0f3"/>
<path d="M8 26 Q20 35 31 26" stroke="#1a1a1a" stroke-width="1.3" fill="none"/>
<rect x="10.5" y="13" width="1.3" height="3.5" fill="#1a1a1a"/><rect x="26.5" y="13" width="1.3" height="3.5" fill="#1a1a1a"/>
</svg>
<svg class="a" style="left:87.5px;top:751px" width="40" height="40" viewBox="0 0 40 40"><defs><linearGradient id="lp" x1="0" y1="0" x2="0" y2="1"><stop offset="0" stop-color="#c9d0d6"/><stop offset="1" stop-color="#7d8388"/></linearGradient></defs>
<circle cx="20" cy="20" r="19" fill="#f2f2f2"/>
<circle cx="20" cy="20" r="17.5" fill="url(#lp)"/>
<path d="M30 8 C24 9 18 13 14 19 L10 19 L6 23 L11 23 L15 27 L15 32 L19 28 L19 24 C25 20 29 14 30 8z" fill="#3b3e42"/>
<circle cx="23" cy="15" r="2" fill="#9aa0a6"/>
</svg>
<svg class="a" style="left:132.5px;top:751px" width="40" height="40" viewBox="0 0 40 40"><defs><linearGradient id="mco" x1="0" y1="0" x2="0" y2="1"><stop offset="0" stop-color="#f0a040"/><stop offset="1" stop-color="#e07020"/></linearGradient><linearGradient id="mcb" x1="0" y1="0" x2="0" y2="1"><stop offset="0" stop-color="#3a6cf0"/><stop offset="1" stop-color="#40c0c0"/></linearGradient><linearGradient id="mcg" x1="0" y1="0" x2="0" y2="1"><stop offset="0" stop-color="#2a9a20"/><stop offset="1" stop-color="#70e040"/></linearGradient></defs>
<rect x="1.5" y="3.5" width="37" height="33" rx="2" fill="#1e1e1e" stroke="#8a8f96" stroke-width="1"/>
<rect x="6" y="8" width="14" height="11" fill="url(#mco)"/>
<rect x="6" y="21" width="14" height="10" fill="url(#mcb)"/>
<rect x="22" y="12" width="13" height="15" fill="url(#mcg)"/>
<circle cx="13" cy="19" r="1.8" fill="#4aa8ff"/><circle cx="13" cy="31" r="1.8" fill="#4aa8ff"/><circle cx="28" cy="27" r="1.8" fill="#4aa8ff"/>
</svg>
<svg class="a" style="left:178.5px;top:751px" width="40" height="40" viewBox="0 0 40 40"><defs></defs>
<circle cx="20" cy="20.5" r="19.5" fill="#2fa84f"/>
<path d="M20 20.5 L36.9 10.75 A19.5 19.5 0 0 0 3.1 10.75 Z" fill="#db4437"/>
<path d="M20 20.5 L36.9 10.75 A19.5 19.5 0 0 1 20 40 Z" fill="#f4c20d"/>
<circle cx="20" cy="20.5" r="9" fill="#fff"/>
<circle cx="20" cy="20.5" r="7" fill="#4a86e8"/>
</svg>
<svg class="a" style="left:223.0px;top:751px" width="40" height="40" viewBox="0 0 40 40"><defs><linearGradient id="ml" x1="0" y1="0" x2="0" y2="1"><stop offset="0" stop-color="#2f74e4"/><stop offset="1" stop-color="#c4def6"/></linearGradient></defs>
<g transform="rotate(-8 20 21)">
<rect x="6" y="4" width="28" height="35" fill="#fdfdfd" stroke="#fdfdfd" stroke-width="1.6" stroke-dasharray="1.2 1"/>
<rect x="8.5" y="6.5" width="23" height="30" fill="url(#ml)"/>
<path d="M11 10 C14 11 16 15 18 20 C21 23 26 26 30 29 C25 29 19 27 15 25 C13 19 12 14 11 10z" fill="#e8e2d8"/>
<path d="M15 25 C19 22 24 24 30 29 C24 30 19 29 15 25z" fill="#8a7048"/>
<path d="M11 26 C14 24 17 23 19 24 C17 27 14 28 11 26z" fill="#c8a060"/>
</g>
<circle cx="29" cy="32" r="6.5" fill="none" stroke="#44546c" stroke-width="0.8" opacity="0.7"/>
</svg>
<svg class="a" style="left:268.0px;top:751px" width="40" height="40" viewBox="0 0 40 40"><defs><linearGradient id="ct" x1="0" y1="0" x2="0" y2="1"><stop offset="0" stop-color="#c29250"/><stop offset="1" stop-color="#a67c40"/></linearGradient></defs>
<g transform="rotate(-4 20 21)">
<rect x="30" y="7" width="4" height="8" fill="#e8e8e8"/><rect x="30" y="15" width="4" height="7" fill="#4ab4e0"/><rect x="30" y="22" width="4" height="7" fill="#4cc04c"/><rect x="30" y="29" width="4" height="7" fill="#e8a830"/>
<rect x="5" y="3" width="27" height="35" rx="2" fill="url(#ct)"/>
<rect x="5" y="3" width="2" height="35" fill="#a87c40"/>
<circle cx="19" cy="19" r="8" fill="#b08448" opacity="0.6"/>
<circle cx="16.5" cy="17" r="3" fill="#a27842"/><circle cx="21.5" cy="17" r="3" fill="#a27842"/>
</g>
</svg>
<svg class="a" style="left:314.0px;top:751px" width="40" height="40" viewBox="0 0 40 40"><defs></defs>
<g transform="rotate(-3 20 20)">
<rect x="4" y="3" width="32" height="34" fill="#6a6f76"/>
<rect x="3" y="2" width="32" height="34" fill="#fdfdfd"/>
<rect x="3" y="2" width="32" height="11" fill="#e5484a"/>
<text x="19" y="10.5" font-family="Liberation Sans" font-size="6.5" font-weight="bold" fill="#fff" text-anchor="middle">ФЕВР.</text>
<text x="19" y="31" font-family="Liberation Sans" font-size="17" fill="#1a1a1a" text-anchor="middle">26</text>
</g>
</svg>
<svg class="a" style="left:360.0px;top:751px" width="40" height="40" viewBox="0 0 40 40"><defs></defs>
<g transform="rotate(-5 20 20)">
<rect x="6" y="3" width="28" height="35" rx="2" fill="#606670"/>
<rect x="5" y="2" width="28" height="35" rx="2" fill="#fafafa"/>
<circle cx="11" cy="10" r="2" fill="#f39a1e"/><circle cx="11" cy="17" r="2" fill="#3aa6f0"/><circle cx="11" cy="24" r="2" fill="#5ac340"/><circle cx="11" cy="31" r="2" fill="#c05ad8"/>
<g stroke="#d0d0d0" stroke-width="0.8"><line x1="15" y1="11" x2="30" y2="11"/><line x1="15" y1="18" x2="30" y2="18"/><line x1="15" y1="25" x2="30" y2="25"/><line x1="15" y1="32" x2="30" y2="32"/></g>
</g>
</svg>
<svg class="a" style="left:405.0px;top:751px" width="40" height="40" viewBox="0 0 40 40"><defs></defs>
<g transform="rotate(-4 20 20)">
<rect x="5" y="3" width="30" height="36" fill="#fbfaf2"/>
<rect x="5" y="3" width="30" height="7" fill="#f5c820"/>
<g stroke="#e0ddd0" stroke-width="0.6"><line x1="6" y1="14" x2="34" y2="14"/><line x1="6" y1="18" x2="34" y2="18"/><line x1="6" y1="22" x2="34" y2="22"/><line x1="6" y1="26" x2="34" y2="26"/><line x1="6" y1="30" x2="34" y2="30"/><line x1="6" y1="34" x2="34" y2="34"/></g>
</g>
</svg>
<svg class="a" style="left:450.5px;top:751px" width="40" height="40" viewBox="0 0 40 40"><defs></defs>
<g transform="rotate(-6 20 20)">
<rect x="3" y="4" width="32" height="32" fill="#f2efe6"/>
<path d="M20 4 L35 4 L35 18 C28 16 23 12 20 4z" fill="#8ed06a"/>
<path d="M3 20 L14 22 L12 36 L3 36z" fill="#f4c0c8"/>
<path d="M10 4 L14 4 L13 36 L9 36z" fill="#3aa0f0"/>
<path d="M3 22 C15 18 22 14 30 4" stroke="#f5d040" stroke-width="2.5" fill="none"/>
</g>
<circle cx="11" cy="25" r="4" fill="#2a7ae8"/>
<circle cx="28" cy="29" r="8.5" fill="#f4f4f4" stroke="#bbb" stroke-width="0.8"/>
<text x="28" y="32" font-family="Liberation Sans" font-size="7" fill="#666" text-anchor="middle">3D</text>
</svg>
<svg class="a" style="left:496.0px;top:751px" width="40" height="40" viewBox="0 0 40 40"><defs><linearGradient id="msg" x1="0" y1="0" x2="0" y2="1"><stop offset="0" stop-color="#6ac4fa"/><stop offset="1" stop-color="#1e88ee"/></linearGradient></defs>
<ellipse cx="18" cy="16" rx="17" ry="13.5" fill="url(#msg)"/>
<path d="M6 26 L4 33 L12 28z" fill="#3a98f0"/>
<ellipse cx="26" cy="25" rx="12" ry="9" fill="#f6f8fb"/>
<path d="M30 32 L33 37 L26 33z" fill="#f6f8fb"/>
<circle cx="21" cy="25" r="1.5" fill="#1a5ac8"/><circle cx="26" cy="25" r="1.5" fill="#1a5ac8"/><circle cx="31" cy="25" r="1.5" fill="#1a5ac8"/>
</svg>
<svg class="a" style="left:541.0px;top:751px" width="40" height="40" viewBox="0 0 40 40"><defs></defs>
<g transform="rotate(-6 20 20)">
<rect x="6" y="3" width="30" height="30" fill="#b01c22"/>
<rect x="2" y="10" width="30" height="28" fill="#f0f0f0"/>
<rect x="3.5" y="11.5" width="13" height="12" fill="#c02028"/><rect x="17.5" y="11.5" width="13" height="12" fill="#c02028"/><rect x="3.5" y="24.5" width="13" height="12" fill="#c02028"/>
<g><ellipse cx="10" cy="19" rx="4" ry="4.5" fill="#2a1a1a"/><ellipse cx="10" cy="20" rx="2.6" ry="3" fill="#e8b8a0"/><ellipse cx="24" cy="19" rx="4" ry="4.5" fill="#2a1a1a"/><ellipse cx="24" cy="20" rx="2.6" ry="3" fill="#e8b8a0"/><ellipse cx="10" cy="32" rx="4" ry="4.5" fill="#2a1a1a"/><ellipse cx="10" cy="33" rx="2.6" ry="3" fill="#e8b8a0"/></g>
</g>
<circle cx="30" cy="29" r="8" fill="#222"/><circle cx="30" cy="29" r="4" fill="#3a4a5a"/><circle cx="30" cy="29" r="2" fill="#101018"/>
</svg>
<svg class="a" style="left:586.5px;top:751px" width="40" height="40" viewBox="0 0 40 40"><defs><linearGradient id="sp" x1="0" y1="0" x2="0" y2="1"><stop offset="0" stop-color="#c8ccd2"/><stop offset="1" stop-color="#80858c"/></linearGradient></defs>
<rect x="2" y="3" width="36" height="35" rx="4" fill="url(#sp)"/>
<circle cx="20" cy="20.5" r="14" fill="#2a2d31"/>
<circle cx="20" cy="20.5" r="12" fill="none" stroke="#a4a8ad" stroke-width="3" stroke-dasharray="2 1.4"/>
<circle cx="20" cy="20.5" r="9" fill="#55595e"/>
<path d="M20 11 L21 20 L28 26 L20 21.5 L12 26 L19 20z" fill="#c8ccd0"/>
<circle cx="20" cy="20.5" r="2.5" fill="#888"/>
</svg>
<svg class="a" style="left:632.0px;top:751px" width="40" height="40" viewBox="0 0 40 40"><defs><radialGradient id="qt" cx="0.45" cy="0.35" r="0.7"><stop offset="0" stop-color="#9ad8ff"/><stop offset="0.6" stop-color="#2a8cf0"/><stop offset="1" stop-color="#1a50b0"/></radialGradient></defs>
<circle cx="19" cy="19.5" r="18" fill="#3a3d42"/>
<circle cx="19" cy="19.5" r="13" fill="url(#qt)"/>
<path d="M24 24 L36 37 L30 38 L20 28z" fill="#2e3034"/>
</svg>
<svg class="a" style="left:677.5px;top:751px" width="40" height="40" viewBox="0 0 40 40"><defs></defs><circle cx="20" cy="20.5" r="19" fill="#f2f2f2" stroke="#ccc" stroke-width="0.6"/><ellipse cx="20" cy="12" rx="4.2" ry="8" fill="#f6a623" opacity="0.85" transform="rotate(0 20 20.5)"/><ellipse cx="20" cy="12" rx="4.2" ry="8" fill="#f8d030" opacity="0.85" transform="rotate(45 20 20.5)"/><ellipse cx="20" cy="12" rx="4.2" ry="8" fill="#a0d040" opacity="0.85" transform="rotate(90 20 20.5)"/><ellipse cx="20" cy="12" rx="4.2" ry="8" fill="#50b860" opacity="0.85" transform="rotate(135 20 20.5)"/><ellipse cx="20" cy="12" rx="4.2" ry="8" fill="#40a8d8" opacity="0.85" transform="rotate(180 20 20.5)"/><ellipse cx="20" cy="12" rx="4.2" ry="8" fill="#6070d0" opacity="0.85" transform="rotate(225 20 20.5)"/><ellipse cx="20" cy="12" rx="4.2" ry="8" fill="#a060c0" opacity="0.85" transform="rotate(270 20 20.5)"/><ellipse cx="20" cy="12" rx="4.2" ry="8" fill="#e05060" opacity="0.85" transform="rotate(315 20 20.5)"/></svg>
<svg class="a" style="left:723.0px;top:751px" width="40" height="40" viewBox="0 0 40 40"><defs><linearGradient id="wd" x1="0" y1="0" x2="0" y2="1"><stop offset="0" stop-color="#4aa8f0"/><stop offset="1" stop-color="#2a78d8"/></linearGradient></defs>
<path d="M6 7 L12.5 33 L20 13 L27.5 33 L34 7" fill="none" stroke="url(#wd)" stroke-width="6.5" stroke-linecap="round" stroke-linejoin="round"/>
</svg>
<svg class="a" style="left:769.5px;top:751px" width="40" height="40" viewBox="0 0 40 40"><defs><linearGradient id="pp" x1="0" y1="0" x2="0" y2="1"><stop offset="0" stop-color="#ff6a3a"/><stop offset="1" stop-color="#d83a1a"/></linearGradient></defs>
<path d="M11 35 V8 H22 C33 8 33 24 22 24 H14" fill="none" stroke="url(#pp)" stroke-width="7" stroke-linecap="round" stroke-linejoin="round"/>
</svg>
<svg class="a" style="left:813.5px;top:751px" width="40" height="40" viewBox="0 0 40 40"><defs><linearGradient id="xl" x1="0" y1="0" x2="0" y2="1"><stop offset="0" stop-color="#6ccc4a"/><stop offset="1" stop-color="#2e9a24"/></linearGradient></defs>
<path d="M9 7 L31 35 M31 7 L9 35" fill="none" stroke="url(#xl)" stroke-width="7" stroke-linecap="round"/>
</svg>
<svg class="a" style="left:859.5px;top:751px" width="40" height="40" viewBox="0 0 40 40"><defs><linearGradient id="ol" x1="0" y1="0" x2="0" y2="1"><stop offset="0" stop-color="#ffe266"/><stop offset="1" stop-color="#e0a812"/></linearGradient></defs>
<ellipse cx="20" cy="21" rx="12.3" ry="15.5" fill="none" stroke="url(#ol)" stroke-width="6"/>
</svg>
<svg class="a" style="left:906.0px;top:751px" width="40" height="40" viewBox="0 0 40 40"><defs><linearGradient id="ly" x1="0" y1="0" x2="0" y2="1"><stop offset="0" stop-color="#52c4dc"/><stop offset="1" stop-color="#1e8aa8"/></linearGradient></defs>
<path d="M10 6 V32 H33" fill="none" stroke="url(#ly)" stroke-width="7" stroke-linecap="round" stroke-linejoin="round"/>
</svg>
<svg class="a" style="left:950.0px;top:751px" width="40" height="40" viewBox="0 0 40 40"><defs><radialGradient id="gl" cx="0.4" cy="0.35" r="0.7"><stop offset="0" stop-color="#a0e0ff"/><stop offset="1" stop-color="#2060c0"/></radialGradient></defs>
<ellipse cx="20" cy="32" rx="17" ry="6" fill="#d0d0d0"/>
<ellipse cx="20" cy="31" rx="15" ry="4.5" fill="#5ab050"/>
<circle cx="20" cy="16" r="13" fill="url(#gl)"/>
<path d="M16 12 L24 12 L24 22 L29 22 L20 34 L11 22 L16 22z" fill="#90d030" stroke="#5a9a20" stroke-width="0.6"/>
</svg>
<svg class="a" style="left:995.0px;top:751px" width="40" height="40" viewBox="0 0 40 40"><defs><linearGradient id="ib" x1="0" y1="0" x2="0" y2="1"><stop offset="0" stop-color="#f8a040"/><stop offset="1" stop-color="#e86010"/></linearGradient></defs>
<circle cx="20" cy="20.5" r="19" fill="#f8f8f8"/>
<circle cx="20" cy="20.5" r="17.5" fill="url(#ib)"/>
<path d="M8 13 C12 12 17 12 19.5 14 L19.5 29 C17 27.5 12 27.5 8 28.5z M32 13 C28 12 23 12 20.5 14 L20.5 29 C23 27.5 28 27.5 32 28.5z" fill="#fff"/>
</svg>
<div class="a" style="left:1049px;top:752px;width:1px;height:48px;background:#2a2e34"></div>
<svg class="a" style="left:1061.0px;top:751px" width="40" height="40" viewBox="0 0 40 40"><defs></defs>
<path d="M7 2 L26 2 L33 9 L33 39 L7 39z" fill="#f4f4f4" stroke="#c8c8c8" stroke-width="0.6"/>
<g stroke="#c8c8c8" stroke-width="0.6"><line x1="10" y1="10" x2="28" y2="10"/><line x1="10" y1="14" x2="24" y2="14"/><line x1="10" y1="18" x2="22" y2="18"/><line x1="10" y1="22" x2="20" y2="22"/></g>
<text x="20" y="36" font-family="Liberation Sans" font-size="6" fill="#888" text-anchor="middle">DOCX</text>
</svg>
<svg class="a" style="left:1104.5px;top:751px" width="44" height="40" viewBox="0 0 44 40"><defs></defs>
<rect x="0" y="9" width="41" height="23" fill="#fdfdfd" stroke="#aaa" stroke-width="0.6"/>
<rect x="0" y="9" width="41" height="3" fill="#d8dde4"/>
<g stroke="#bbb" stroke-width="0.6"><line x1="4" y1="17" x2="20" y2="17"/><line x1="4" y1="20" x2="18" y2="20"/><line x1="4" y1="23" x2="22" y2="23"/><line x1="4" y1="26" x2="16" y2="26"/></g>
<path d="M27 27 L30 27 L32 34 L34 29 L36 29 L38 34 L40 27 L43 27 L39 38 L36 38 L35 33 L33 38 L30 38z" fill="#3a9af0"/>
</svg>
<svg class="a" style="left:1150.5px;top:751px" width="44" height="40" viewBox="0 0 44 40"><defs></defs>
<rect x="0" y="9" width="41" height="23" fill="#fdfdfd" stroke="#aaa" stroke-width="0.6"/>
<rect x="0" y="9" width="41" height="3" fill="#d8dde4"/>
<rect x="9" y="15" width="6" height="11" fill="#8a8078"/>
<rect x="8" y="22" width="9" height="6" fill="#22305a"/>
<path d="M27 27 L30 27 L32 34 L34 29 L36 29 L38 34 L40 27 L43 27 L39 38 L36 38 L35 33 L33 38 L30 38z" fill="#3a9af0"/>
</svg>
<svg class="a" style="left:1197.5px;top:751px" width="40" height="40" viewBox="0 0 40 40"><defs><linearGradient id="tr" x1="0" y1="0" x2="1" y2="0"><stop offset="0" stop-color="#e8e8e8"/><stop offset="0.5" stop-color="#f8f8f8"/><stop offset="1" stop-color="#d0d0d0"/></linearGradient></defs>
<path d="M5 8 L35 8 L31 38 C31 39 9 39 9 38z" fill="url(#tr)"/>
<ellipse cx="20" cy="8" rx="15" ry="2.5" fill="#f0f0f0"/>
<path d="M9 6 L14 2 L18 6 L24 1 L30 6z" fill="#555"/>
<rect x="13" y="4" width="3" height="3" fill="#40a0e0"/><rect x="22" y="3" width="3" height="3" fill="#e05030"/>
</svg>
<div class="a" style="left:59px;top:794px;width:4px;height:4px;border-radius:50%;background:#0a0a14"></div>
<div class="a" style="left:196px;top:794px;width:4px;height:4px;border-radius:50%;background:#0a0a14"></div>
<div class="a" style="left:740.5px;top:794px;width:4px;height:4px;border-radius:50%;background:#0a0a14"></div>
<!--/DOCK-->
</body></html>
